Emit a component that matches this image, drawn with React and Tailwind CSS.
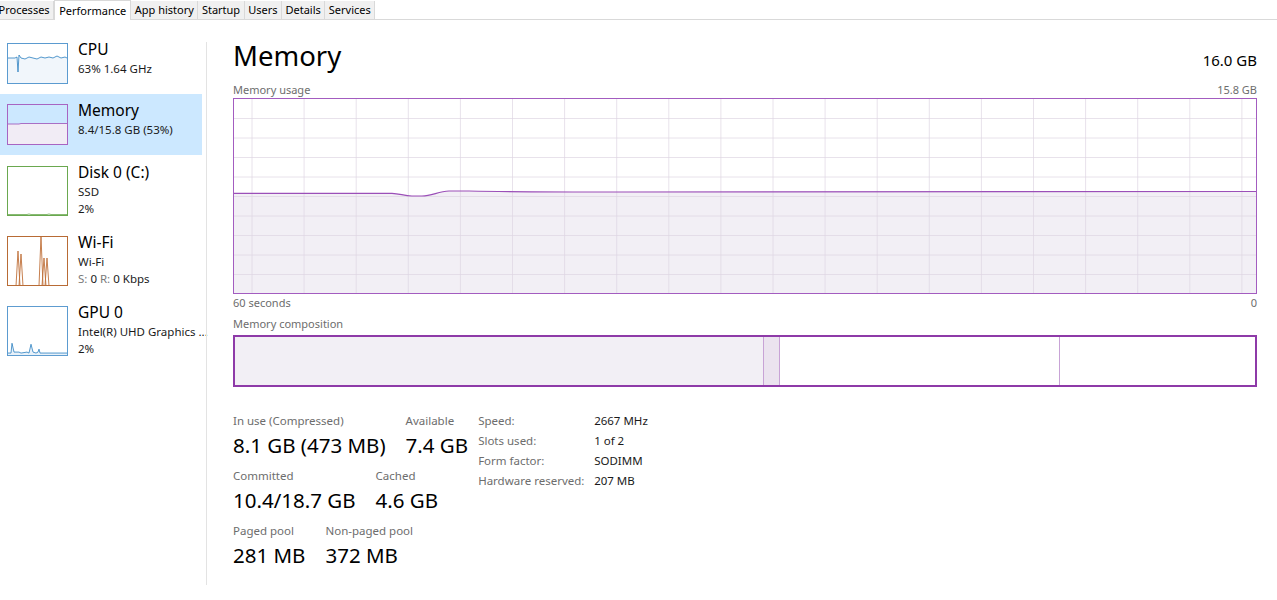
import React from 'react';

const tabs = ['Processes', 'Performance', 'App history', 'Startup', 'Users', 'Details', 'Services'];

function TabBar() {
  return (
    <div className="flex h-[20px] items-end border-b border-[#d9d9d9] bg-white">
      <div className="-ml-[5px] flex items-end">
        {tabs.map((t) =>
          t === 'Performance' ? (
            <div key={t} className="-mb-px h-[20px] border-x border-t border-[#d9d9d9] bg-white px-[4px] text-[11px] leading-[19px] text-black">
              {t}
            </div>
          ) : (
            <div key={t} className="h-[18px] border-r border-[#d9d9d9] bg-[#f0f0f0] px-[3.5px] text-[11px] leading-[18px] text-black">
              {t}
            </div>
          )
        )}
      </div>
    </div>
  );
}

function CpuThumb() {
  return (
    <svg viewBox="0 0 61 41" className="h-full w-full" preserveAspectRatio="none">
      <path d="M1,15 L8,15 L10,14 L11,29 L12,12 L14,15 L18,16 L22,14 L26,15 L30,16 L34,14 L38,15 L42,14 L46,15 L50,13 L54,15 L58,14 L60,15 L60,40 L1,40 Z" fill="#f1f6fb" />
      <path d="M1,15 L8,15 L10,14 L11,29 L12,12 L14,15 L18,16 L22,14 L26,15 L30,16 L34,14 L38,15 L42,14 L46,15 L50,13 L54,15 L58,14 L60,15" fill="none" stroke="#2a7fc0" strokeWidth="0.8" />
      <rect x="0.5" y="0.5" width="60" height="40" fill="none" stroke="#5b9bd0" />
    </svg>
  );
}

function MemThumb() {
  return (
    <svg viewBox="0 0 61 41" className="h-full w-full" preserveAspectRatio="none">
      <path d="M1,20 L12,20 L14,19.5 L60,19.5 L60,40 L1,40 Z" fill="#f1ecf5" />
      <path d="M1,20 L12,20 L14,19.5 L60,19.5" fill="none" stroke="#9b4fb8" strokeWidth="0.8" />
      <rect x="0.5" y="0.5" width="60" height="40" fill="none" stroke="#a864c2" />
    </svg>
  );
}

function DiskThumb() {
  return (
    <svg viewBox="0 0 61 50" className="h-full w-full" preserveAspectRatio="none">
      <path d="M1,48.5 L20,48.5 L22,48 L24,48.5 L40,48.5 L42,48 L44,48.5 L60,48.5" fill="none" stroke="#6aa84f" strokeWidth="0.8" />
      <rect x="0.5" y="0.5" width="60" height="49" fill="none" stroke="#6aa84f" />
    </svg>
  );
}

function WifiThumb() {
  return (
    <svg viewBox="0 0 61 50" className="h-full w-full" preserveAspectRatio="none">
      <path d="M9,50 L11,15 L13,50 M12,50 L14,18 L16,50 M32,50 L34,0 L36,50 M35,50 L37,22 L39,50 M38,50 L40,22 L42,50" fill="none" stroke="#c0703a" strokeWidth="0.9" />
      <rect x="0.5" y="0.5" width="60" height="49" fill="none" stroke="#b86b35" />
    </svg>
  );
}

function GpuThumb() {
  return (
    <svg viewBox="0 0 61 51" className="h-full w-full" preserveAspectRatio="none">
      <path d="M1,48 L4,48 L5,38 L7,47 L12,47 L14,48 L20,47 L22,48 L24,39 L26,47 L29,48 L31,47 L32,44 L33,48 L60,48 L60,50 L1,50 Z" fill="#e8f1f9" />
      <path d="M1,48 L4,48 L5,38 L7,47 L12,47 L14,48 L20,47 L22,48 L24,39 L26,47 L29,48 L31,47 L32,44 L33,48 L60,48" fill="none" stroke="#2a7fc0" strokeWidth="0.8" />
      <rect x="0.5" y="0.5" width="60" height="50" fill="none" stroke="#5b9bd0" />
    </svg>
  );
}

function SideItem({ selected, tall, thumb, title, lines }) {
  return (
    <div className={`flex w-[202px] pl-[7px] ${tall ? 'h-[70px]' : 'h-[61px]'} ${selected ? 'bg-[#cce8ff]' : ''}`}>
      <div className={`mt-[10px] w-[61px] shrink-0 ${tall ? 'h-[50px]' : 'h-[41px]'}`}>{thumb}</div>
      <div className="ml-[10px] pt-[5px]">
        <div className="whitespace-nowrap text-[15.5px] leading-[22px] text-black">{title}</div>
        {lines.map((l, i) => (
          <div key={i} className="whitespace-nowrap text-[11.5px] leading-[17px] text-[#1a1a1a]">
            {l}
          </div>
        ))}
      </div>
    </div>
  );
}

function Sidebar() {
  return (
    <div className="flex shrink-0">
      <div className="w-[206px] pt-[13px]">
        <SideItem thumb={<CpuThumb />} title="CPU" lines={['63%  1.64 GHz']} />
        <SideItem selected thumb={<MemThumb />} title="Memory" lines={['8.4/15.8 GB (53%)']} />
        <div className="h-px" />
        <SideItem tall thumb={<DiskThumb />} title="Disk 0 (C:)" lines={['SSD', '2%']} />
        <SideItem
          tall
          thumb={<WifiThumb />}
          title="Wi-Fi"
          lines={[
            'Wi-Fi',
            <span key="s">
              <span className="text-[#7a7a7a]">S:</span> 0 <span className="text-[#7a7a7a]">R:</span> 0 Kbps
            </span>,
          ]}
        />
        <SideItem tall thumb={<GpuThumb />} title="GPU 0" lines={['Intel(R) UHD Graphics ...', '2%']} />
      </div>
      <div className="mt-[22px] h-[543px] w-px bg-[#e3e3e3]" />
    </div>
  );
}

function UsageChart() {
  const hLines = [1, 2, 3, 4, 5, 6, 7, 8, 9].map((k) => k * 19.5);
  const vLines = Array.from({ length: 20 }, (_, k) => 18 + k * 52.1);
  const line =
    'M0,94.3 L158,94.3 C166,94.5 170,97 178,97 L188,97 C198,97 204,92.5 215,92 L235,92 C260,92.5 300,93 385,93 L1024,92.5';
  return (
    <div className="h-[196px] w-full border border-[#a35cc0]">
      <svg viewBox="0 0 1022 194" preserveAspectRatio="none" className="block h-full w-full">
        <path d={`${line} L1024,194 L0,194 Z`} fill="#f2eff5" />
        {hLines.map((y) => (
          <line key={'h' + y} x1="0" x2="1022" y1={y} y2={y} stroke="#ded6e3" strokeOpacity="0.7" strokeWidth="1" />
        ))}
        {vLines.map((x) => (
          <line key={'v' + x} x1={x} x2={x} y1="0" y2="194" stroke="#ded6e3" strokeOpacity="0.7" strokeWidth="1" />
        ))}
        <path d={line} fill="none" stroke="#9b4fb8" strokeWidth="1.2" />
      </svg>
    </div>
  );
}

function CompositionBar() {
  return (
    <div className="flex h-[52px] w-full border-2 border-[#8e3aa8]">
      <div className="w-[528px] bg-[#f2eff5]" />
      <div className="w-px bg-[#c8a3d6]" />
      <div className="w-[15px] bg-[#ebe3ef]" />
      <div className="w-px bg-[#c8a3d6]" />
      <div className="w-[279px] bg-white" />
      <div className="w-px bg-[#c8a3d6]" />
      <div className="flex-1 bg-white" />
    </div>
  );
}

function Stat({ label, value }) {
  return (
    <div>
      <div className="whitespace-nowrap text-[11.5px] leading-[16px] text-[#6d6d6d]">{label}</div>
      <div className="mt-[3px] whitespace-nowrap text-[20.5px] leading-[26px] text-black">{value}</div>
    </div>
  );
}

function Details() {
  const rows = [
    ['Speed:', '2667 MHz'],
    ['Slots used:', '1 of 2'],
    ['Form factor:', 'SODIMM'],
    ['Hardware reserved:', '207 MB'],
  ];
  return (
    <div className="-mt-[2px]">
      {rows.map(([k, v]) => (
        <div key={k} className="flex text-[11.5px] leading-[20px]">
          <div className="w-[116px] text-[#6d6d6d]">{k}</div>
          <div className="text-[#1a1a1a]">{v}</div>
        </div>
      ))}
    </div>
  );
}

function Main() {
  return (
    <div className="flex-1 pl-[26px] pr-[20px]">
      <div className="mt-[17px] flex items-baseline justify-between">
        <div className="text-[27.5px] leading-[38px] text-black">Memory</div>
        <div className="text-[15px] text-black">16.0 GB</div>
      </div>
      <div className="mt-[8px] flex justify-between text-[11px] leading-[14px] text-[#6d6d6d]">
        <span>Memory usage</span>
        <span>15.8 GB</span>
      </div>
      <div className="mt-px">
        <UsageChart />
      </div>
      <div className="mt-[2px] flex justify-between text-[11px] leading-[14px] text-[#6d6d6d]">
        <span>60 seconds</span>
        <span>0</span>
      </div>
      <div className="mt-[7px] text-[11px] leading-[14px] text-[#6d6d6d]">Memory composition</div>
      <div className="mt-[4px]">
        <CompositionBar />
      </div>
      <div className="mt-[26px] flex items-start gap-[10px]">
        <div>
          <div className="flex gap-[20px]">
            <Stat label="In use (Compressed)" value="8.1 GB (473 MB)" />
            <Stat label="Available" value="7.4 GB" />
          </div>
          <div className="mt-[10px] flex gap-[20px]">
            <Stat label="Committed" value="10.4/18.7 GB" />
            <Stat label="Cached" value="4.6 GB" />
          </div>
          <div className="mt-[10px] flex gap-[20px]">
            <Stat label="Paged pool" value="281 MB" />
            <Stat label="Non-paged pool" value="372 MB" />
          </div>
        </div>
        <Details />
      </div>
    </div>
  );
}

export default function App() {
  return (
    <div className="h-[600px] w-[1277px] overflow-hidden bg-white font-['Noto_Sans',sans-serif]">
      <TabBar />
      <div className="flex">
        <Sidebar />
        <Main />
      </div>
    </div>
  );
}
